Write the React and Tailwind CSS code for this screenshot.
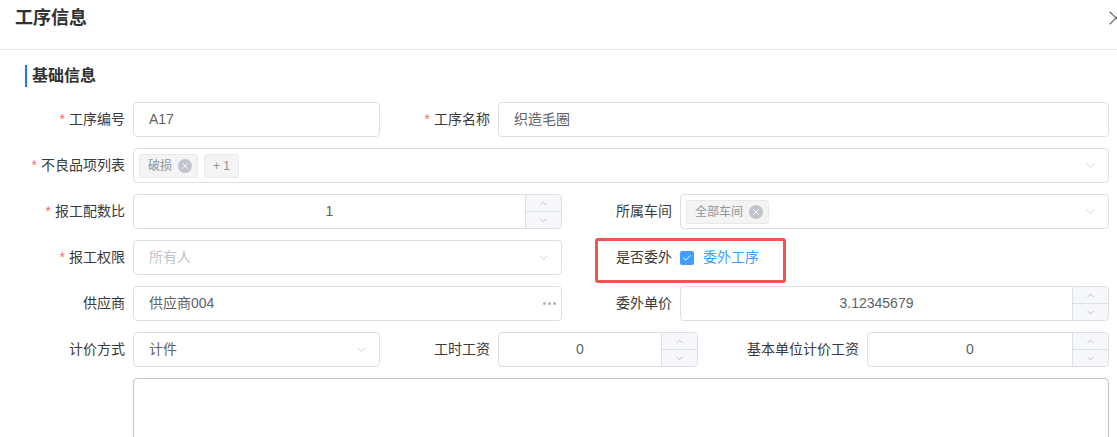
import { ChevronDown, ChevronUp, X, Check } from 'lucide-react';

const FONT = { fontFamily: '"Liberation Sans", "Noto Sans CJK SC", sans-serif' };

function Label({ width, required, children }) {
  return (
    <div
      style={{ width }}
      className="shrink-0 flex items-center justify-end text-[14px] text-[#3a3a3a] whitespace-nowrap"
    >
      {required && <span className="text-[#f56c6c] mr-1">*</span>}
      {children}
    </div>
  );
}

function Box({ children, className = '' }) {
  return (
    <div
      className={`flex-1 min-w-0 h-[35px] flex items-center rounded border border-[#dcdfe6] bg-white text-[14px] text-[#606266] ${className}`}
    >
      {children}
    </div>
  );
}

function Tag({ children, closable }) {
  return (
    <span
      className={`h-[24px] flex items-center rounded-[3px] bg-[#f4f4f5] border border-[#e9e9eb] text-[12px] text-[#909399] mr-[6px] ${
        closable ? 'pl-[8px] pr-[5px]' : 'px-[8px]'
      }`}
    >
      {children}
      {closable && (
        <span className="w-[14px] h-[14px] rounded-full bg-[#c0c4cc] flex items-center justify-center ml-[6px]">
          <X size={10} strokeWidth={2} className="text-white" />
        </span>
      )}
    </span>
  );
}

function Chevron() {
  return <ChevronDown size={15} strokeWidth={1.2} className="text-[#c0c4cc] mr-[10px] shrink-0" />;
}

function Stepper() {
  return (
    <div className="w-[36px] h-full shrink-0 flex flex-col border-l border-[#dcdfe6] bg-[#f5f7fa] rounded-r">
      <div className="flex-1 flex items-center justify-center border-b border-[#dcdfe6]">
        <ChevronUp size={11} strokeWidth={1.2} className="text-[#909399]" />
      </div>
      <div className="flex-1 flex items-center justify-center">
        <ChevronDown size={11} strokeWidth={1.2} className="text-[#909399]" />
      </div>
    </div>
  );
}

function NumberBox({ value }) {
  return (
    <Box>
      <div className="flex-1 text-center">{value}</div>
      <Stepper />
    </Box>
  );
}

// total width = label + 8px gap + control
function Field({ width, labelWidth, label, required, children }) {
  return (
    <div style={{ width }} className="shrink-0 flex items-center gap-2">
      <Label width={labelWidth} required={required}>{label}</Label>
      {children}
    </div>
  );
}

export default function App() {
  return (
    <div style={FONT} className="w-[1117px] h-[437px] overflow-hidden bg-white relative">
      {/* header */}
      <div className="h-[50px] border-b border-[#e4e7ed] flex items-start pl-[15px] pt-[6px]">
        <h2 className="text-[18px] font-bold text-[#303133] leading-[24px]">工序信息</h2>
      </div>
      <X size={24} strokeWidth={1.1} className="absolute left-[1104px] top-[6px] text-[#606266]" />

      {/* section title */}
      <div className="flex items-center h-[22px] mt-[15px] ml-[25px]">
        <span className="w-[2px] h-[22px] bg-[#1677ff]" />
        <span className="ml-[5px] text-[16px] font-bold text-[#303133]">基础信息</span>
      </div>

      <div className="mt-[15px] flex flex-col gap-[11px] w-[1109px]">
        {/* row 1 */}
        <div className="flex">
          <Field width={380} labelWidth={125} label="工序编号" required>
            <Box><span className="pl-[15px]">A17</span></Box>
          </Field>
          <Field width={729} labelWidth={110} label="工序名称" required>
            <Box><span className="pl-[15px]">织造毛圈</span></Box>
          </Field>
        </div>

        {/* row 2 */}
        <div className="flex">
          <Field width={1109} labelWidth={125} label="不良品项列表" required>
            <Box>
              <div className="flex-1 flex items-center pl-[5px]">
                <Tag closable>破损</Tag>
                <Tag>+ 1</Tag>
              </div>
              <Chevron />
            </Box>
          </Field>
        </div>

        {/* row 3 */}
        <div className="flex">
          <Field width={562} labelWidth={125} label="报工配数比" required>
            <NumberBox value="1" />
          </Field>
          <Field width={547} labelWidth={110} label="所属车间">
            <Box>
              <div className="flex-1 flex items-center pl-[5px]">
                <Tag closable>全部车间</Tag>
              </div>
              <Chevron />
            </Box>
          </Field>
        </div>

        {/* row 4 */}
        <div className="flex">
          <Field width={562} labelWidth={125} label="报工权限" required>
            <Box>
              <span className="flex-1 pl-[15px] text-[#c0c4cc]">所有人</span>
              <Chevron />
            </Box>
          </Field>
          <Field width={547} labelWidth={110} label="是否委外">
            <div className="h-[35px] flex items-center">
              <span className="w-[14px] h-[14px] rounded-[2px] bg-[#409eff] flex items-center justify-center">
                <Check size={10} strokeWidth={2.2} className="text-white" />
              </span>
              <span className="ml-[9px] text-[14px] text-[#409eff]">委外工序</span>
            </div>
          </Field>
        </div>

        {/* row 5 */}
        <div className="flex">
          <Field width={562} labelWidth={125} label="供应商">
            <Box>
              <span className="flex-1 pl-[15px]">供应商004</span>
              <span className="flex gap-[2px] mr-[5px]">
                <span className="w-[3px] h-[3px] rounded-full bg-[#b0b3b8]" />
                <span className="w-[3px] h-[3px] rounded-full bg-[#b0b3b8]" />
                <span className="w-[3px] h-[3px] rounded-full bg-[#b0b3b8]" />
              </span>
            </Box>
          </Field>
          <Field width={547} labelWidth={110} label="委外单价">
            <NumberBox value="3.12345679" />
          </Field>
        </div>

        {/* row 6 */}
        <div className="flex">
          <Field width={380} labelWidth={125} label="计价方式">
            <Box>
              <span className="flex-1 pl-[15px]">计件</span>
              <Chevron />
            </Box>
          </Field>
          <Field width={318} labelWidth={110} label="工时工资">
            <NumberBox value="0" />
          </Field>
          <Field width={411} labelWidth={161} label="基本单位计价工资">
            <NumberBox value="0" />
          </Field>
        </div>

        {/* row 7 textarea */}
        <div className="flex pl-[133px]">
          <div className="flex-1 h-[80px] rounded border border-[#c0c4cc] bg-white" />
        </div>
      </div>

      {/* highlight box */}
      <div className="absolute left-[595px] top-[238px] w-[191px] h-[45px] border-[3px] border-[#f25454] rounded-[3px] pointer-events-none" />
    </div>
  );
}
